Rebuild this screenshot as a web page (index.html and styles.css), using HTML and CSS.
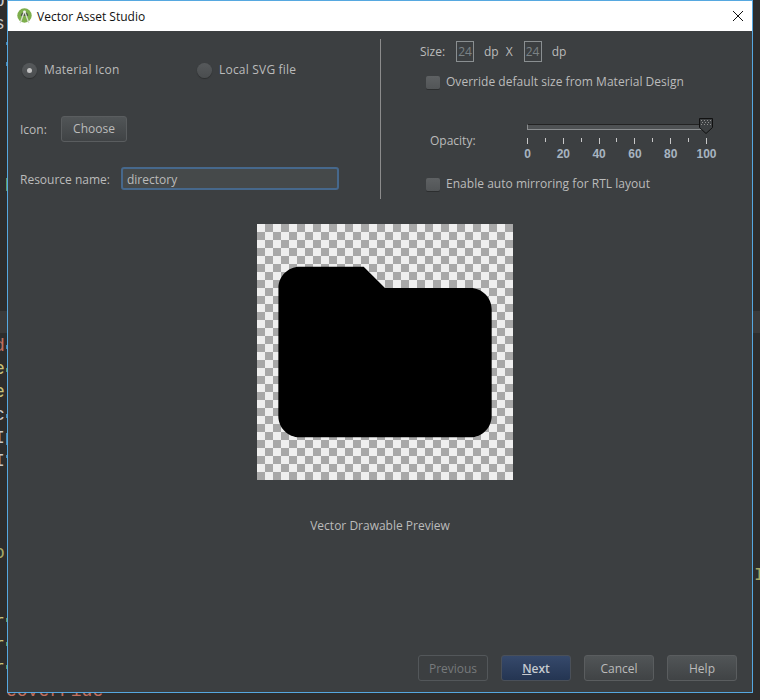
FILE: index.html
```html
<!DOCTYPE html>
<html lang="en">
<head>
    <meta charset="UTF-8">
    <meta name="viewport" content="width=device-width, initial-scale=1.0">
    <title>Vector Asset Studio</title>
    <link rel="stylesheet" href="styles.css">
</head>
<body>

    <!-- editor showing behind the dialog -->
    <div class="editor">
        <div class="caret-row"></div>
        <pre class="code"><span class="c-white">p</span>
<span class="c-white">s</span>













<span class="c-red">d</span>
<span class="c-yellow">e</span>
<span class="c-yellow">e</span>
<span class="c-white">c</span>
<span class="c-white">I</span>
<span class="c-white">I</span>



<span class="c-olive">o</span>


<span class="c-yellow">r</span>
<span class="c-yellow">r</span>
<span class="c-yellow">r</span>
<span class="c-red last-line">eoverPide</span></pre>
        <div class="gutter"></div>
        <span class="stray">I</span>
    </div>

    <div class="dialog">
        <div class="titlebar">
            <svg class="app-icon" width="15" height="16" viewBox="0 0 15 16">
                <circle cx="7.500" cy="7.500" r="7.200" fill="#7dae4c"/>
                <path d="M3.800 8a3.700 3.700 0 0 1 7.400 0z" fill="#4f5d45"/>
                <path d="M7.500 3L3.200 15M7.500 3L11.800 15" stroke="#d9ded4" stroke-width="1.300" fill="none"/>
                <circle cx="7.500" cy="3.800" r="1.300" fill="#f2f2f2"/>
            </svg>
            <span class="title">Vector Asset Studio</span>
            <svg class="close" width="12" height="12" viewBox="0 0 12 12">
                <path d="M1 1L11 11M11 1L1 11" stroke="#111" stroke-width="1" fill="none"/>
            </svg>
        </div>

        <div class="form">
            <div class="form-left">
                <div class="radio-row">
                    <label class="radio-item radio-first"><span class="radio on"></span><span class="radio-text">Material Icon</span></label>
                    <label class="radio-item"><span class="radio"></span><span class="radio-text">Local SVG file</span></label>
                </div>
                <div class="icon-row">
                    <span class="icon-label">Icon:</span>
                    <button class="btn choose">Choose</button>
                </div>
                <div class="name-row">
                    <span class="name-label">Resource name:</span>
                    <div class="name-input">directory</div>
                </div>
            </div>
            <div class="divider"></div>
            <div class="form-right">
                <div class="size-row">
                    <span class="size-label">Size:</span>
                    <span class="size-box">24</span>
                    <span class="dp">dp</span>
                    <span class="times">X</span>
                    <span class="size-box">24</span>
                    <span class="dp">dp</span>
                </div>
                <label class="check-row override"><span class="check"></span><span class="check-text">Override default size from Material Design</span></label>
                <div class="opacity-row">
                    <span class="opacity-label">Opacity:</span>
                    <div class="slider">
                        <div class="track">
                            <svg class="thumb" width="16" height="18" viewBox="0 0 16 18">
                                <path d="M1.500 1.500h13v9l-6.500 6-6.500-6z" fill="#3c3f41" stroke="#111" stroke-width="1"/>
                                <path d="M3 3h1v1H3zM6 3h1v1H6zM9 3h1v1H9zM12 3h1v1h-1zM4 5h1v1H4zM7 5h1v1H7zM10 5h1v1h-1zM3 7h1v1H3zM6 7h1v1H6zM9 7h1v1H9zM12 7h1v1h-1z" fill="#8d8d8d"/>
                            </svg>
                        </div>
                        <div class="ticks">
                            <i class="major"></i><i></i><i class="major"></i><i></i><i class="major"></i><i></i><i class="major"></i><i></i><i class="major"></i><i></i><i class="major"></i>
                        </div>
                        <div class="nums">
                            <span>0</span><span>20</span><span>40</span><span>60</span><span>80</span><span>100</span>
                        </div>
                    </div>
                </div>
                <label class="check-row mirror"><span class="check"></span><span class="check-text">Enable auto mirroring for RTL layout</span></label>
            </div>
        </div>

        <div class="preview">
            <svg width="256" height="256" viewBox="0 0 24 24">
                <path d="M10 4H4c-1.100 0-1.990.9-1.990 2L2 18c0 1.100.9 2 2 2h16c1.100 0 2-.9 2-2V8c0-1.100-.9-2-2-2h-8l-2-2z" fill="#000"/>
            </svg>
        </div>
        <div class="caption">Vector Drawable Preview</div>

        <div class="footer">
            <button class="btn disabled">Previous</button>
            <button class="btn primary"><u>N</u>ext</button>
            <button class="btn">Cancel</button>
            <button class="btn">Help</button>
        </div>
    </div>

</body>
</html>
```

FILE: styles.css
```css
html, body {
    margin: 0;
    height: 700px;
    overflow: hidden;
}
body {
    background-color: #2d2d2d;
    font-family: "Open Sans", "Noto Sans", sans-serif;
    font-size: 12px;
    color: #bbbbbb;
    position: relative;
}

/* editor behind */
.editor {
    position: absolute;
    left: 0;
    top: 0;
    width: 760px;
    height: 700px;
    overflow: hidden;
}
.caret-row {
    position: absolute;
    left: 0;
    top: 311px;
    width: 760px;
    height: 22px;
    background-color: #3a3a3a;
}
.code {
    position: absolute;
    left: -6px;
    top: -10px;
    margin: 0;
    font-family: "Liberation Mono", monospace;
    font-size: 18px;
    line-height: 23px;
}
.c-white { color: #c8c8c8; }
.c-red { color: #c0705f; }
.c-yellow { color: #c9c27a; }
.c-olive { color: #a5a866; }
.last-line {
    margin-left: 12px;
}
.gutter {
    position: absolute;
    left: 6px;
    top: 0;
    width: 1px;
    height: 700px;
    background: linear-gradient(transparent 42px, #4a88b5 42px 45px, transparent 45px 62px, #4a88b5 62px 66px, transparent 66px 178px, #5f9c6a 178px 191px, transparent 191px 345px, #4a88b5 345px 349px, transparent 349px 368px, #5f9c6a 368px 372px, transparent 372px 414px, #4a88b5 414px 418px, transparent 418px 433px, #4a88b5 433px 445px, transparent 445px 455px, #4a88b5 455px 458px, transparent 458px 618px, #5f9c6a 618px 622px, transparent 622px 642px, #5f9c6a 642px 646px, transparent 646px 665px, #5f9c6a 665px 669px, transparent 669px);
}
.stray {
    position: absolute;
    left: 754px;
    top: 565px;
    font-family: "Liberation Mono", monospace;
    font-size: 18px;
    color: #a5a866;
}

/* dialog */
.dialog {
    position: absolute;
    left: 7px;
    top: 0;
    width: 744px;
    height: 691px;
    border: 1px solid #56a8e0;
    background-color: #3c3f41;
    display: flex;
    flex-direction: column;
}
.titlebar {
    height: 30px;
    background-color: white;
    display: flex;
    align-items: center;
    padding-left: 9px;
    padding-right: 8px;
    color: #111;
    flex-shrink: 0;
}
.app-icon {
    margin-right: 5px;
}
.close {
    margin-left: auto;
}

/* form */
.form {
    display: flex;
    padding-top: 8px;
    height: 160px;
}
.form-left {
    width: 372px;
    padding-top: 23px;
    box-sizing: border-box;
}
.radio-row {
    display: flex;
    padding-left: 14px;
}
.radio-item {
    display: flex;
    align-items: center;
    gap: 7px;
    height: 16px;
}
.radio-first {
    width: 175px;
}
.radio-text {
    letter-spacing: 0.2px;
    margin-top: -2px;
}
.radio {
    width: 15px;
    height: 15px;
    border-radius: 50%;
    background: linear-gradient(#56595b, #4a4d4f);
    box-shadow: 0 1px 1px #2c2e2f;
    display: flex;
    align-items: center;
    justify-content: center;
}
.radio.on::after {
    content: "";
    width: 5px;
    height: 5px;
    border-radius: 50%;
    background-color: #c4c4c4;
}
.icon-row {
    display: flex;
    align-items: center;
    margin-top: 38px;
    padding-left: 12px;
}
.icon-label {
    width: 41px;
}
.name-row {
    display: flex;
    align-items: center;
    margin-top: 25px;
    padding-left: 12px;
}
.name-label {
    width: 101px;
    padding-top: 2px;
}
.name-input {
    width: 218px;
    height: 23px;
    box-sizing: border-box;
    background-color: #45494a;
    border: 2px solid #46688c;
    border-radius: 3px;
    padding-left: 4px;
    line-height: 21px;
}
.divider {
    width: 1px;
    height: 160px;
    background-color: #8c8c8c;
}
.form-right {
    padding-left: 39px;
    padding-top: 2px;
}
.size-row {
    display: flex;
    align-items: center;
    height: 21px;
}
.size-label {
    width: 36px;
}
.size-box {
    width: 18px;
    height: 21px;
    box-sizing: border-box;
    border: 1px solid #8a8f91;
    color: #7b8285;
    text-align: center;
    line-height: 19px;
    font-size: 12px;
}
.dp {
    margin-left: 10px;
}
.times {
    margin-left: 7px;
    margin-right: 11px;
}
.check-row {
    display: flex;
    align-items: center;
    gap: 6px;
    margin-left: 6px;
    height: 14px;
}
.check-text {
    margin-top: -2px;
    letter-spacing: 0.03px;
}
.override {
    margin-top: 13px;
}
.mirror {
    margin-top: 11px;
}
.check {
    width: 14px;
    height: 13px;
    background: linear-gradient(#5e6163, #525557);
    border-radius: 2px;
    box-shadow: 0 1px 0 #2c2e2f;
}

/* slider */
.opacity-row {
    display: flex;
    margin-top: 29px;
    margin-left: 10px;
}
.opacity-label {
    width: 97px;
    padding-top: 14px;
}
.slider {
    width: 180px;
    height: 48px;
}
.track {
    position: relative;
    margin-top: 6px;
    height: 6px;
    box-sizing: border-box;
    border: 1px solid #8a8d8f;
    border-top-color: #232323;
    background-color: #4e5153;
}
.thumb {
    position: absolute;
    right: -8px;
    top: -8px;
}
.ticks {
    display: flex;
    justify-content: space-between;
    align-items: flex-start;
    margin-top: 8px;
    height: 6px;
}
.ticks i {
    display: block;
    width: 1px;
    height: 4px;
    background-color: #c8c8c8;
}
.ticks i.major {
    height: 6px;
}
.nums {
    display: flex;
    justify-content: space-between;
    margin-top: 3px;
    font-family: "Liberation Sans", sans-serif;
    font-weight: bold;
    font-size: 12px;
    line-height: 14px;
    color: #a7b4c0;
}
.nums span {
    width: 1px;
    display: flex;
    justify-content: center;
}

/* preview */
.preview {
    width: 256px;
    height: 256px;
    margin-top: 25px;
    margin-left: 249px;
    flex-shrink: 0;
    background: conic-gradient(#a8a8a8 25%, #efefef 0 50%, #a8a8a8 0 75%, #efefef 0) 0 0 / 16px 16px;
}
.preview svg {
    display: block;
}
.caption {
    margin-top: 38px;
    text-align: center;
    line-height: 16px;
}

/* buttons */
.btn {
    width: 70px;
    height: 26px;
    padding: 0;
    border: 1px solid #5a5d5f;
    border-radius: 3px;
    background: linear-gradient(#515557, #404345);
    color: #bbbbbb;
    font-family: inherit;
    font-size: 12px;
}
.choose {
    width: 66px;
    padding-bottom: 2px;
}
.footer {
    margin-top: auto;
    display: flex;
    justify-content: flex-end;
    gap: 13px;
    padding-right: 15px;
    padding-bottom: 11px;
}
.btn.disabled {
    background: none;
    border-color: #53575a;
    color: #777a7c;
}
.btn.primary {
    background: linear-gradient(#36496b, #243552);
    border-color: #4a5059;
    color: #c5cad0;
    font-weight: 600;
}
```
